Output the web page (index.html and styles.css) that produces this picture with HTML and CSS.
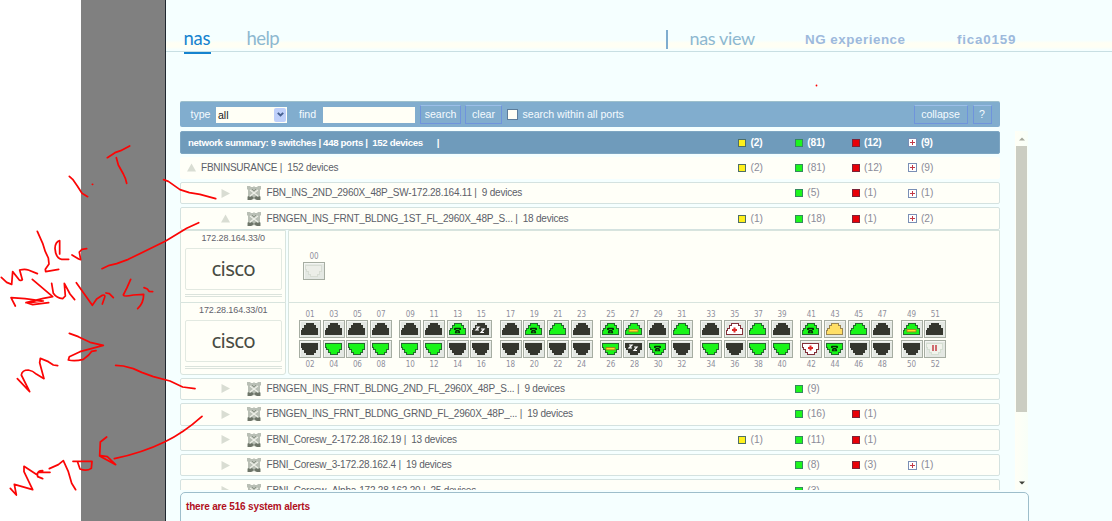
FILE: index.html
```html
<!DOCTYPE html>
<html lang="en">
<head>
<meta charset="utf-8">
<title>nas</title>
<link rel="stylesheet" href="styles.css">
</head>
<body>
<svg class="defs" width="0" height="0">
  <symbol id="jack" viewBox="0 0 20 16"><path shape-rendering="crispEdges" d="M6.5 2.5h7v2h2v3h2v6h-16v-4h1v-2h2v-3h2z"/></symbol>
  <symbol id="phone" viewBox="0 0 8 7"><path d="M0 2V1l1-1h6l1 1v2H6V2H2v1H0zM2 3h4l1 2v2H1V5z" fill="#062b06"/><path d="M3 4h2v2H3z" fill="#1a7a1a"/></symbol>
  <symbol id="switch" viewBox="0 0 14 14"><path d="M0 0h3l1 1h2l1-1 1 1h2l1-1h3v3l-1 1v6l1 1v3H9l-2-1-2 1H0v-3l1-1V4L0 3z" fill="#b9bfb5"/><path d="M1 10l2 1 2-1 2 2 2-2 2 1 2-1v4h-3l-3-2-3 2H1z" fill="#6d7468"/><path d="M3 4l8 6M11 4l-8 6" stroke="#eef0e8" stroke-width="1.2"/><path d="M5 3l2 2 2-2" stroke="#8d9588" fill="none"/></symbol>
</svg>
<div class="page">
  <div class="gutter"></div>
  <main class="app">
    <header class="top">
      <nav class="nav">
        <a class="tab active">nas</a>
        <a class="tab">help</a>
      </nav>
      <div class="user">
        <span class="view">nas view</span>
        <span class="brand">NG experience</span>
        <span class="account">fica0159</span>
      </div>
    </header>
    <div class="toolbar">
      <span class="label">type</span>
      <div class="select"><span>all</span><i><svg width="7" height="5" viewBox="0 0 7 5"><path d="M.8.8l2.7 2.7L6.2.8" fill="none" stroke="#46608f" stroke-width="1.9"/></svg></i></div>
      <span class="label find">find</span>
      <div class="input"></div>
      <div class="btn search">search</div>
      <div class="btn clear">clear</div>
      <div class="check"></div>
      <span class="label within">search within all ports</span>
      <div class="btn collapse">collapse</div>
      <div class="btn q">?</div>
    </div>
    <div class="body">
      <div class="list" id="list"></div>
      <div class="scroll">
        <svg width="6" height="4" viewBox="0 0 6 4"><path d="M0 3.5L3 .5l3 3z" fill="#a5a89c"/></svg>
        <div class="thumb"></div>
        <svg width="6" height="4" viewBox="0 0 6 4"><path d="M0 .5h6l-3 3z" fill="#3e4038"/></svg>
      </div>
    </div>
    <footer class="alerts">there are 516 system alerts</footer>
  </main>
</div>
<svg class="ink" width="1112" height="521" viewBox="0 0 1112 521">
  <g transform="translate(0 130) scale(.33333)">
    <path d="M208 139L218 148L232 168L246 190L263 200M277 163h1M322 83L345 68L362 62L389 48M349 83L355 105L370 132L376 145L380 160"/>
    <path d="M491 149L505 154L540 179L568 188L600 193L647 206M596 278L560 295L497 333L385 388L350 401L328 406L306 416"/>
    <path d="M4 442L20 457L35 463L38 425L58 450Q64 453 67 449L59 420Q75 416 85 420L112 431M112 304L128 340L136 365L145 384L147 402L136 418L137 425L176 418"/>
    <path d="M179 372V332Q166 335 165 355Q167 385 185 388H206M216 375L236 387L242 389L238 366L246 358L260 356"/>
    <path d="M46 528L33 503L75 506L130 513L82 519L98 524L146 518M97 448L158 500L130 505L78 518M155 460L160 490Q170 505 188 506L196 498L193 460L210 492L224 509"/>
    <path d="M229 458L277 526L290 507L307 496Q318 492 313 505L307 522M318 489L328 491L340 503M392 448L381 473L370 495Q372 501 400 495L431 493Q431 520 413 536M432 473L442 477L447 484L458 485"/>
  </g>
  <g transform="translate(0 320) scale(.33333)">
    <path d="M52 176L89 215L64 165Q66 150 85 150Q98 152 110 163L132 176L119 128L121 115L145 125L160 135L173 137M208 40L235 50L270 67L310 76L240 95L208 110L205 120Q225 125 250 118L266 105L275 94L288 92"/>
    <path d="M347 136L370 138L400 146L425 157L460 170L510 183L548 201L585 206M606 289Q550 339 495 365Q430 397 343 416"/>
    <path d="M320 351L301 366L299 408L347 434L322 410L302 407M31 505L49 525L43 493L98 509L72 455V439L112 465Q112 452 128 452M112 460L113 470L128 476M116 457H150M148 446L175 434L190 422L205 455L215 490L227 509M219 424H276L274 445Q260 455 240 447L232 424"/>
  </g>
  <circle cx="816.5" cy="85.5" r=".9"/>
</svg>
<script src="app.js"></script>
</body>
</html>
```
FILE: styles.css
```css
* { box-sizing: border-box; }
body { margin: 0; width: 1112px; height: 521px; overflow: hidden; background: #fff; font: 10px/12px "Liberation Sans", Arial, sans-serif; letter-spacing: -.22px; color: #5c6068; }
.defs { display: none; }
.page { display: flex; height: 521px; padding-left: 81px; }
.gutter { width: 84px; background: #808080; }
.app { flex: 1; height: 521px; overflow: hidden; display: flex; flex-direction: column; border-left: 1px solid #202830; background: #f5ffff; }

.top { display: flex; justify-content: space-between; height: 52px; flex: none; padding: 25px 96px 0 17.5px; border-bottom: 1px solid #c8dfe3; background: linear-gradient(#f5ffff 40px, #fffff4 43px, #fffff4 47px, #f5ffff 50px); }
.nav { display: flex; gap: 36px; }
.tab { height: 29px; font: 400 18.5px/26px Lato, sans-serif; letter-spacing: -.6px; color: #8db8d0; }
.tab.active { border-bottom: 2px solid #1583cf; color: #1583cf; width: 27px; letter-spacing: -.2px; }
.user { display: flex; align-items: flex-start; line-height: 29px; font-weight: bold; font-size: 13.4px; letter-spacing: .52px; color: #9db9dc; }
.view { height: 19px; margin: 5px 0 0 -2px; padding-left: 21.5px; border-left: 2px solid #7fadcf; font: 400 18px/16px Lato, sans-serif; letter-spacing: -.35px; color: #8db8d0; width: 139px; white-space: nowrap; }
.brand { width: 152px; }
.account { width: 59px; white-space: nowrap; letter-spacing: .8px; }

.toolbar { display: flex; align-items: center; flex: none; width: 820px; height: 26px; margin: 49px 0 0 14px; padding-left: 10.5px; border-top: 1px solid #9dbfcc; border-radius: 2px; background: #81adce; color: #f5fbff; font-size: 10.6px; letter-spacing: -.02px; white-space: nowrap; }
.label { width: 25.5px; line-height: 12px; margin-bottom: 1px; }
.select { display: flex; justify-content: space-between; width: 71px; height: 16px; padding: 1px 1px 1px 2px; background: #fffff6; color: #202020; line-height: 15px; }
.select i { display: flex; align-items: center; justify-content: center; width: 12px; background: #bfd0fa; border-radius: 2px; }
.find { margin-left: 12px; width: 24px; }
.input { width: 92px; height: 16px; background: #fffff6; }
.btn { height: 19px; border: 1px solid #6f94dc; border-top-color: #9cbfe8; line-height: 17px; text-align: center; }
.search { width: 41px; margin-left: 5px; }
.clear { width: 37px; margin-left: 4px; }
.check { width: 11px; height: 11px; margin: 0 5px 0 4.5px; border: 1px solid #5c7d9b; background: #fffff6; }
.within { flex: 1; }
.collapse { width: 54px; margin-right: 5px; }
.q { width: 19px; margin-right: 8.5px; }

.body { display: flex; flex: none; height: 359px; margin: 4px 0 0 14px; }
.list { width: 820px; overflow: hidden; }
.row { display: grid; grid-template-columns: 558px repeat(4, 56.8px); align-items: center; height: 22.4px; margin-bottom: 3px; border: 1px solid #d4e2e0; border-radius: 2px; background: #fffff8; white-space: nowrap; }
.row > * { margin-left: -1px; }
.row.summary { height: 23.4px; margin-bottom: 2.2px; background: #6f9bbb; border-color: #7ea6c2; color: #fff; font-weight: bold; font-size: 9.7px; letter-spacing: -.36px; }
.row.root { border-color: #fffff8; }
.row.open { margin-bottom: 0; }
.spacer { height: 3px; }
.title { display: flex; align-items: center; }
.title b { font-weight: inherit; white-space: pre; }
.arrow { width: 9px; height: 9px; margin: 0 5px 0 6.5px; fill: #d9ddd3; }
.root .arrow { margin-right: 5.5px; }
.leaf .arrow { margin: 0 17px 0 40.5px; }
.leaf .switch { margin-right: 6px; }
.summary .title { padding-left: 8px; }
.count { display: flex; align-items: center; gap: 4.5px; font-size: 10.2px; letter-spacing: 0; color: #8b8b98; }
.summary .count { color: #fff; font-weight: bold; letter-spacing: -.2px; }
.sq { width: 8px; height: 8px; border: 1px solid #4f6f66; }
.yellow { background: #fff01c; }
.green { background: #1df51d; border-color: #35895e; }
.red { background: #e80008; border-color: #7b2438; }
.plus { width: 9px; height: 9px; margin-right: -1px; background: linear-gradient(#c23b48, #c23b48) center/5px 1px no-repeat, linear-gradient(#c23b48, #c23b48) center/1px 5px no-repeat, #fff; border-color: #7a8fb5; }

.unit { display: grid; grid-template-columns: 105.5px 712px; gap: 2.5px; height: 72.5px; }
.chassis, .ports { border: 1px solid #d8e4de; border-radius: 0 0 3px 3px; background: #fffff8; }
.chassis { text-align: center; font-size: 9px; line-height: 14px; padding: 0 3px 0 4px; color: #62626c; letter-spacing: -.1px; }
.unit .logo { height: 42px; margin-top: 3px; border: 1px solid #e2e9e1; border-radius: 2px; font: 20.5px/38px "Noto Sans", sans-serif; letter-spacing: -.75px; color: #494c44; }
.vent { height: 3px; margin-top: 4px; border: solid #dbe3dc; border-width: 1px 0; }
.ports { display: flex; padding: 6px 0 0 10px; gap: 7.2px; }
.ports.single { padding: 20px 0 0 14px; }
.group { display: grid; grid-template-columns: repeat(4, 22px); column-gap: 1.7px; grid-template-rows: 10.5px 20px 19px 12px; align-content: start; height: 62px; }
.num { font: 8px/11px "DejaVu Sans Condensed", "DejaVu Sans", sans-serif; letter-spacing: -.1px; text-align: center; color: #8f8f9d; }
.port { width: 22px; height: 18px; border: 1px solid #a6ada2; background: #e4e8e3; box-shadow: inset 1px 1px #f4f6f2; }
.port svg { display: block; }
.single .group { grid-template-rows: 11.5px 18px; }

.scroll { display: flex; flex-direction: column; align-items: center; width: 13px; margin-left: 15px; padding-top: 6px; background: linear-gradient(90deg, #fffff6, #f8fff8); }
.thumb { width: 11px; height: 266px; margin: 5px 0 69px; background: #cbcdc2; }
.alerts { flex: 1; width: 849px; margin: 2px 0 -6px 14px; padding: 8px 5px; border: 1px solid #9dbecb; border-radius: 5px; color: #b1101e; font-weight: bold; font-size: 10px; letter-spacing: -.17px; }

/* red pen strokes lie over the whole page */
.ink { position: absolute; left: 0; top: 0; pointer-events: none; fill: #f00; }
.ink path { fill: none; stroke: #fb0505; stroke-width: 5.2; stroke-linecap: round; stroke-linejoin: round; }
```
FILE: app.js
```js
const KINDS = ['yellow', 'green', 'red', 'plus'];
const counts = c => c.map((n, i) => n ? `<span class="count"><i class="sq ${KINDS[i]}"></i>(${n})</span>` : '<span></span>').join('');
const arrow = open => `<svg class="arrow" viewBox="0 0 9 9"><path d="${open ? 'M0 8.5L4.5 .5L9 8.5z' : 'M.5 0L9 4.5L.5 9z'}"/></svg>`;
const leaf = (name, devices, c, open) => `<div class="row leaf${open ? ' open' : ''}"><div class="title">${arrow(open)}<svg class="switch" width="14" height="14"><use href="#switch"/></svg><b>${name} |  ${devices} devices</b></div>${counts(c)}</div>`;

// k: dark, g: green, p: phone, z: sleeping, m: minus, r: medical, y: yellow, h: paused, e: empty
const FILL = { k: ['#34362e', '#34362e'], z: ['#34362e', '#34362e'], r: ['#fff', '#82303a'], y: ['#ffdf67', '#9b8650'], h: ['#f1f3ec', '#d5dfd2'], e: ['#eceee8', '#d8ddd4'] };
function port(kind, down) {
  const [fill, stroke] = FILL[kind] || ['#18f518', '#236b2c'];
  const cy = down ? 7 : 9;
  const mark = {
    p: `<use href="#phone" x="6" y="${cy - 2.5}" width="7" height="6"/>`,
    m: `<rect x="5" y="${cy - .5}" width="9" height="2.4" fill="#ffdc24" stroke="#a57820" stroke-width=".8"/>`,
    r: `<path d="M7 ${cy}h5M9.5 ${cy - 2.5}v5" stroke="#e02828" stroke-width="2"/>`,
    z: `<path d="M5 ${cy - 3}h3l-3 3h3M10 ${cy - 1}h3l-3 3.5h3" fill="none" stroke="#fff" stroke-width="1.2"/>`,
    h: `<path d="M8 ${cy - 3}v6M11 ${cy - 3}v6" stroke="#c84a50" stroke-width="1.6"/>`
  }[kind] || '';
  return `<div class="port"><svg width="20" height="16"><g fill="${fill}" stroke="${stroke}"${down ? ' transform="translate(0 16) scale(1 -1)"' : ''}><use href="#jack"/></g>${mark}</svg></div>`;
}
const num = n => `<span class="num">${String(n).padStart(2, '0')}</span>`;
const TOP = ['kkkk', 'kkpz', 'kpgk', 'pmkg', 'krgk', 'pygk', 'mk'];
const BOTTOM = ['kggg', 'ggkk', 'kkkk', 'mzpk', 'gkgg', 'rpkk', 'kh'];
const groups = TOP.map((row, g) => {
  const odd = [...row].map((_, i) => g * 8 + i * 2 + 1);
  const pad = odd.length < 4 ? '<i></i><i></i>' : '';
  return '<div class="group">' + [
    odd.map(num).join(''),
    [...row].map(k => port(k, false)).join(''),
    [...BOTTOM[g]].map(k => port(k, true)).join(''),
    odd.map(n => num(n + 1)).join('')
  ].join(pad) + '</div>';
}).join('');
const unit = (ip, ports, cls) => `<div class="unit"><div class="chassis">${ip}<div class="logo">cisco</div><div class="vent"></div></div><div class="ports ${cls}">${ports}</div></div>`;

document.getElementById('list').innerHTML =
  `<div class="row summary"><div class="title"><b>network summary: 9 switches | 448 ports |  152 devices      |</b></div>${counts([2, 81, 12, 9])}</div>` +
  `<div class="row root"><div class="title">${arrow(true)}<b>FBNINSURANCE |  152 devices</b></div>${counts([2, 81, 12, 9])}</div>` +
  leaf('FBN_INS_2ND_2960X_48P_SW-172.28.164.11', 9, [0, 5, 1, 1]) +
  leaf('FBNGEN_INS_FRNT_BLDNG_1ST_FL_2960X_48P_S...', 18, [1, 18, 1, 2], true) +
  unit('172.28.164.33/0', `<div class="group">${num(0)}<i></i><i></i><i></i>${port('e', true)}</div>`, 'single') +
  unit('172.28.164.33/01', groups, '') +
  '<div class="spacer"></div>' +
  leaf('FBNGEN_INS_FRNT_BLDNG_2ND_FL_2960X_48P_S...', 9, [0, 9]) +
  leaf('FBNGEN_INS_FRNT_BLDNG_GRND_FL_2960X_48P_...', 19, [0, 16, 1]) +
  leaf('FBNI_Coresw_2-172.28.162.19', 13, [1, 11, 1]) +
  leaf('FBNI_Coresw_3-172.28.162.4', 19, [0, 8, 3, 1]) +
  leaf('FBNI_Coresw_Alpha-172.28.162.20', 25, [0, 3]);
```
